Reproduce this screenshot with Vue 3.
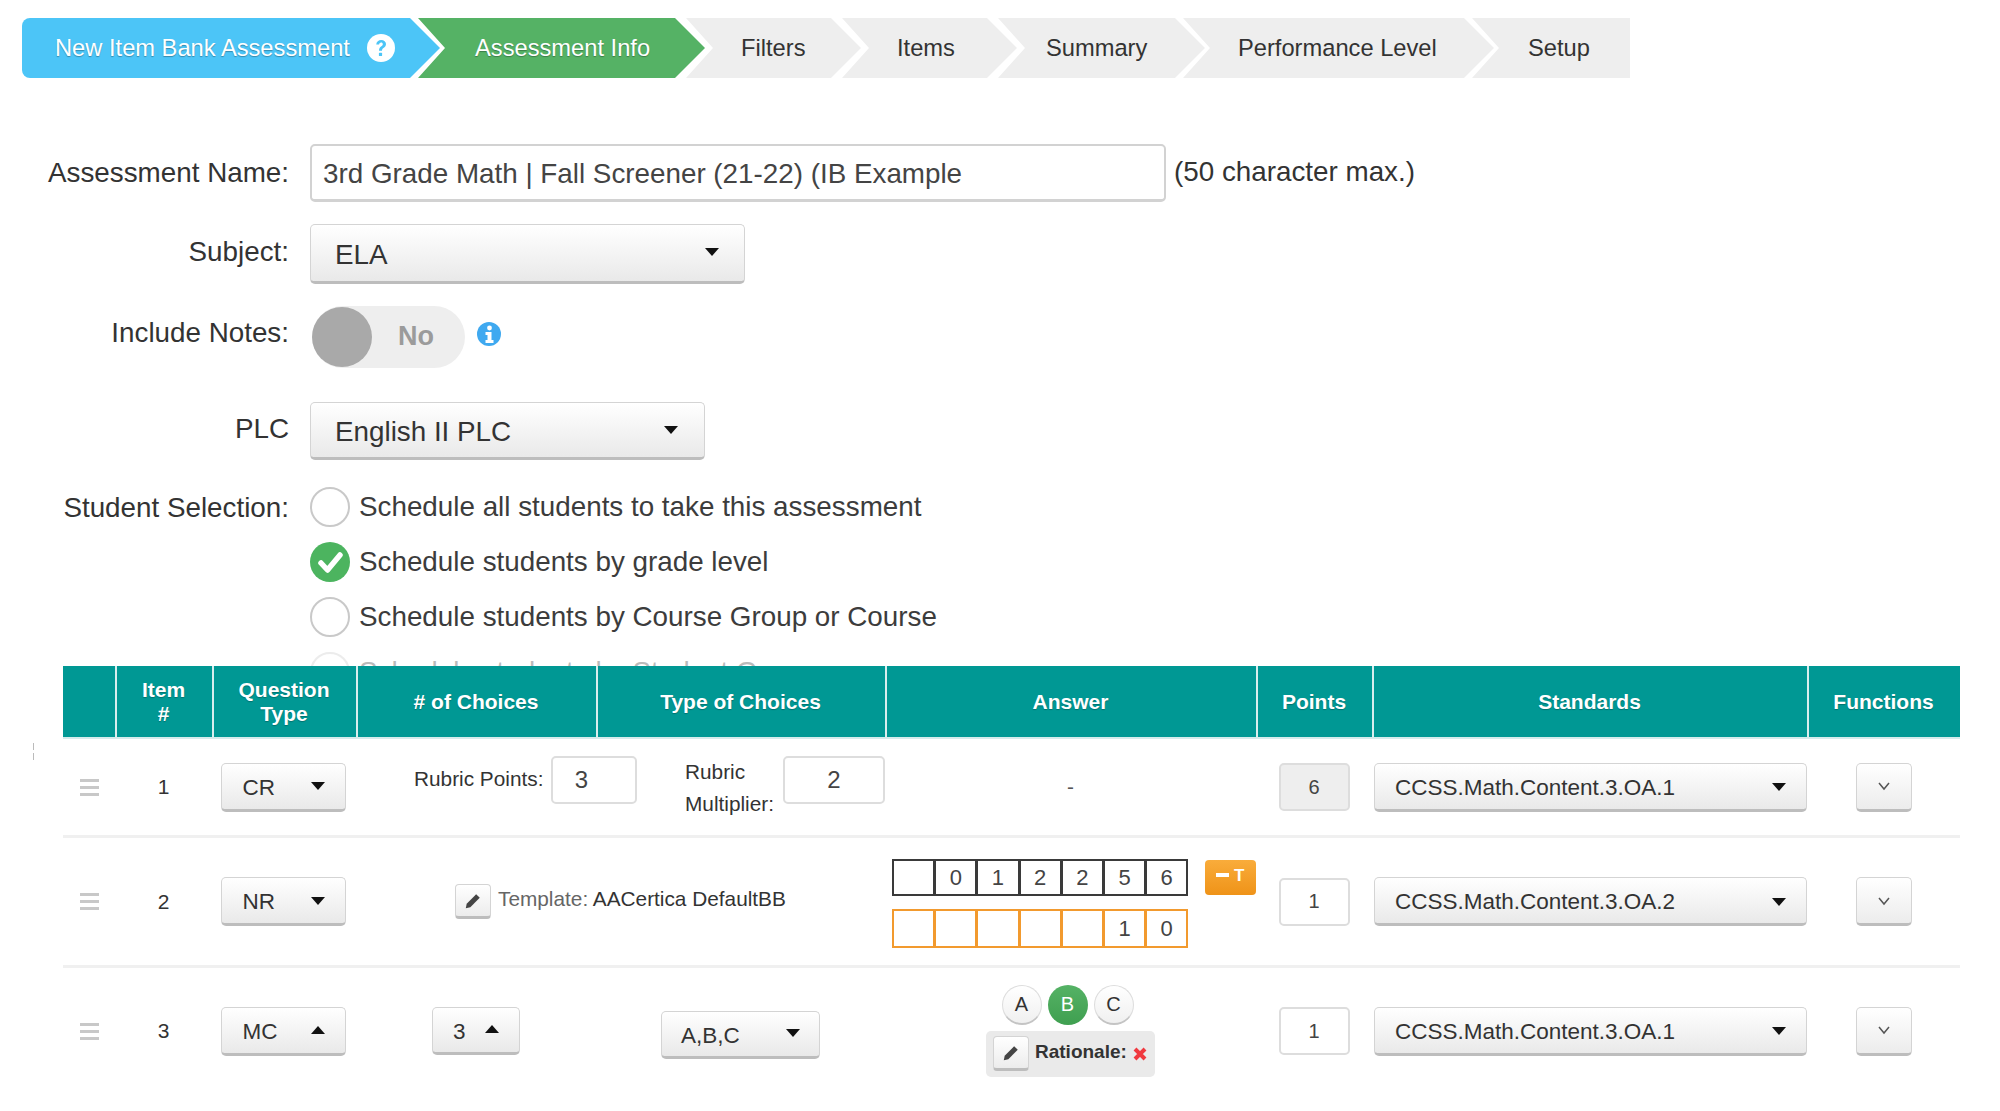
<script setup>
const steps = ['Assessment Info', 'Filters', 'Items', 'Summary', 'Performance Level', 'Setup']
const radios = [
  { text: 'Schedule all students to take this assessment', on: false },
  { text: 'Schedule students by grade level', on: true },
  { text: 'Schedule students by Course Group or Course', on: false },
  { text: 'Schedule students by Student Group', on: false }
]
const heads = [
  { text: '' }, { text: 'Item\n#' }, { text: 'Question\nType' }, { text: '# of Choices' },
  { text: 'Type of Choices' }, { text: 'Answer' }, { text: 'Points' }, { text: 'Standards' }, { text: 'Functions' }
]
const topDigits = ['', '0', '1', '2', '2', '5', '6']
const bottomDigits = ['', '', '', '', '', '1', '0']
</script>

<template>
  <div class="page">
    <nav class="steps">
      <div class="step intro">
        <span>New Item Bank Assessment</span>
        <svg class="help" viewBox="0 0 28 28" width="28" height="28">
          <circle cx="14" cy="14" r="14" fill="#fff" />
          <path d="M9.200 10.600c.3-3 2.400-4.600 5-4.600 2.800 0 4.800 1.700 4.800 4.100 0 2-1.100 3-2.500 4-1.100.8-1.500 1.300-1.500 2.700h-3c0-2.200.6-3.200 2-4.300 1.100-.8 1.800-1.400 1.800-2.300 0-1-.7-1.600-1.700-1.600-1.100 0-1.800.7-2 2z" fill="#4cc5f7" />
          <rect x="11.900" y="18.800" width="3.200" height="3.200" rx=".6" fill="#4cc5f7" />
        </svg>
      </div>
      <div v-for="(s, i) in steps" :key="s" class="step" :class="'s' + i">{{ s }}</div>
    </nav>

    <form class="form" @submit.prevent>
      <div class="row name-row">
        <label>Assessment Name:</label>
        <div class="text-input">3rd Grade Math | Fall Screener (21-22) (IB Example</div>
        <span class="hint">(50 character max.)</span>
      </div>
      <div class="row subject-row">
        <label>Subject:</label>
        <div class="select big subject">ELA<i class="caret"></i></div>
      </div>
      <div class="row notes-row">
        <label>Include Notes:</label>
        <div class="toggle"><span class="knob"></span><b>No</b></div>
        <svg class="info" viewBox="0 0 24 24" width="24" height="24">
          <circle cx="12" cy="12" r="12" fill="#3fa9f0" />
          <circle cx="12.500" cy="6" r="2.400" fill="#fff" />
          <path d="M8.500 10h6v8h2v3h-8v-3h2v-5h-2z" fill="#fff" />
        </svg>
      </div>
      <div class="row plc-row">
        <label>PLC</label>
        <div class="select big plc">English II PLC<i class="caret"></i></div>
      </div>
      <div class="row student-row">
        <label>Student Selection:</label>
        <div class="radios">
          <div v-for="(r, i) in radios" :key="r.text" class="radio-line" :class="{ faded: i === 3 }">
            <span class="radio" :class="{ on: r.on }">
              <svg v-if="r.on" viewBox="0 0 40 40" width="40" height="40">
                <path d="M11 21l6.500 7L30 13" fill="none" stroke="#fff" stroke-width="5.500" stroke-linecap="round" stroke-linejoin="round" />
              </svg>
            </span>
            <span>{{ r.text }}</span>
          </div>
        </div>
      </div>
    </form>

    <i class="stray"></i>

    <section class="table">
      <header class="grid head">
        <div v-for="(h, i) in heads" :key="i" class="th">{{ h.text }}</div>
      </header>

      <div class="grid tr r1">
        <div class="drag"><i></i><i></i><i></i></div>
        <div class="num">1</div>
        <div class="cell"><div class="select qt">CR<i class="caret"></i></div></div>
        <div class="rubric">
          <span class="rubric-label">Rubric Points:</span>
          <span class="box rubric-pts">3</span>
          <span class="multi-label">Rubric<br />Multiplier:</span>
          <span class="box rubric-mult">2</span>
        </div>
        <div class="cell dash">-</div>
        <div class="cell"><span class="box pts grey">6</span></div>
        <div class="std"><div class="select standard">CCSS.Math.Content.3.OA.1<i class="caret"></i></div></div>
        <div class="cell">
          <button class="fn" type="button"><svg viewBox="0 0 14 10" width="14" height="10"><path d="M2 2l5 6 5-6" fill="none" stroke="#555" stroke-width="1.500" /></svg></button>
        </div>
      </div>

      <div class="grid tr r2">
        <div class="drag"><i></i><i></i><i></i></div>
        <div class="num">2</div>
        <div class="cell"><div class="select qt">NR<i class="caret"></i></div></div>
        <div class="template">
          <button class="pencil" type="button">
            <svg viewBox="0 0 20 20" width="18" height="18"><path d="M13.500 2.500l4 4L7 17l-5 1 1-5z" fill="#444" /></svg>
          </button>
          <span class="tpl-text"><span class="tpl-key">Template:</span> AACertica DefaultBB</span>
        </div>
        <div class="answer-nr">
          <div class="digit-stack">
            <div class="digits dark"><span v-for="(d, i) in topDigits" :key="i">{{ d }}</span></div>
            <div class="digits orange"><span v-for="(d, i) in bottomDigits" :key="i">{{ d }}</span></div>
          </div>
          <button class="t-btn" type="button"><i></i>T</button>
        </div>
        <div class="cell"><span class="box pts">1</span></div>
        <div class="std"><div class="select standard">CCSS.Math.Content.3.OA.2<i class="caret"></i></div></div>
        <div class="cell">
          <button class="fn" type="button"><svg viewBox="0 0 14 10" width="14" height="10"><path d="M2 2l5 6 5-6" fill="none" stroke="#555" stroke-width="1.500" /></svg></button>
        </div>
      </div>

      <div class="grid tr r3">
        <div class="drag"><i></i><i></i><i></i></div>
        <div class="num">3</div>
        <div class="cell"><div class="select qt">MC<i class="caret up"></i></div></div>
        <div class="cell"><div class="select choices">3<i class="caret up"></i></div></div>
        <div class="cell"><div class="select types">A,B,C<i class="caret"></i></div></div>
        <div class="mc">
          <div class="bubbles">
            <span class="bubble">A</span>
            <span class="bubble on">B</span>
            <span class="bubble">C</span>
          </div>
          <div class="rationale">
            <button class="pencil" type="button">
              <svg viewBox="0 0 20 20" width="18" height="18"><path d="M13.500 2.500l4 4L7 17l-5 1 1-5z" fill="#444" /></svg>
            </button>
            <b>Rationale:</b>
            <svg class="cross" viewBox="0 0 14 14" width="14" height="14"><path d="M2 2l10 10M12 2L2 12" stroke="#f0393f" stroke-width="4" /></svg>
          </div>
        </div>
        <div class="cell"><span class="box pts">1</span></div>
        <div class="std"><div class="select standard">CCSS.Math.Content.3.OA.1<i class="caret"></i></div></div>
        <div class="cell">
          <button class="fn" type="button"><svg viewBox="0 0 14 10" width="14" height="10"><path d="M2 2l5 6 5-6" fill="none" stroke="#555" stroke-width="1.500" /></svg></button>
        </div>
      </div>
    </section>
  </div>
</template>

<style scoped>
.page {
  position: relative;
  width: 2000px;
  height: 1111px;
  overflow: hidden;
  background: #fff;
  color: #333;
  font-family: "Liberation Sans", Arial, sans-serif;
}

/* wizard */
.steps {
  display: flex;
  margin-left: 22px;
  padding-top: 18px;
  height: 60px;
}
.step {
  display: flex;
  align-items: center;
  height: 60px;
  padding-left: 55px;
  box-sizing: border-box;
  flex: none;
  font-size: 23.700px;
  color: #333;
  background: #eee;
  margin-left: -19px;
  clip-path: polygon(0 0, calc(100% - 30px) 0, 100% 50%, calc(100% - 30px) 100%, 0 100%, 27px 50%);
}
.intro {
  width: 418px;
  margin-left: 0;
  padding-left: 33px;
  background: #4cc5f7;
  color: #fff;
  border-radius: 8px 0 0 8px;
  text-shadow: 0 1px 1px rgba(0, 0, 0, 0.3);
  clip-path: polygon(0 0, calc(100% - 30px) 0, 100% 50%, calc(100% - 30px) 100%, 0 100%);
}
.help { margin-left: 17px; flex: none; }
.s0 {
  width: 287px;
  margin-left: -22px;
  padding-left: 57px;
  background: #55b265;
  color: #fff;
  text-shadow: 0 1px 1px rgba(0, 0, 0, 0.3);
}
.s1 { width: 175px; }
.s2 { width: 175px; }
.s3 { width: 207px; padding-left: 48px; }
.s4 { width: 311px; margin-left: -22px; }
.s5 {
  width: 158px;
  margin-left: -22px;
  padding-left: 56px;
  clip-path: polygon(0 0, 100% 0, 100% 100%, 0 100%, 27px 50%);
}

/* form */
.form {
  box-sizing: border-box;
  height: 588px;
  padding-top: 66px;
  overflow: hidden;
  font-size: 27.800px;
}
.row {
  display: flex;
  align-items: center;
}
.row > label {
  width: 289px;
  margin-right: 21px;
  text-align: right;
  flex: none;
}
.name-row { height: 58px; }
.subject-row { height: 60px; margin-top: 22px; }
.notes-row { height: 62px; margin-top: 22px; }
.plc-row { height: 58px; margin-top: 34px; }
.student-row { align-items: flex-start; margin-top: 27px; }
.student-row > label { line-height: 42px; }
.name-row > label { margin-top: 0; }
.subject-row > label { margin-top: -4px; }
.notes-row > label { margin-top: -8px; }
.plc-row > label { margin-top: -4px; }

.text-input {
  box-sizing: border-box;
  width: 856px;
  height: 58px;
  padding-left: 11px;
  line-height: 56px;
  border: 2px solid #d2d2d2;
  border-bottom-width: 3px;
  border-radius: 5px;
  color: #444;
  background: #fff;
}
.hint { margin-left: 8px; margin-top: -3px; }

.select {
  box-sizing: border-box;
  position: relative;
  display: flex;
  align-items: center;
  border: 1px solid #d4d4d4;
  border-bottom: 3px solid #bdbdbd;
  border-radius: 5px;
  background: linear-gradient(#fff, #e9e9e9);
  color: #333;
}
.big { height: 58px; padding-left: 24px; padding-top: 3px; }
.subject { width: 435px; height: 60px; }
.plc { width: 395px; }
.caret {
  position: absolute;
  top: 50%;
  margin-top: -5px;
  width: 0;
  height: 0;
  border-left: 7px solid transparent;
  border-right: 7px solid transparent;
  border-top: 8px solid #111;
}
.caret.up {
  border-top: 0;
  border-bottom: 8px solid #111;
}
.subject .caret { right: 25px; margin-top: -5px; }
.plc .caret { right: 26px; margin-top: -4px; }

.toggle {
  position: relative;
  box-sizing: border-box;
  width: 153px;
  height: 62px;
  margin-left: 2px;
  padding-left: 86px;
  line-height: 60px;
  border-radius: 31px;
  background: #eee;
  color: #9b9b9b;
  font-size: 27px;
}
.knob {
  position: absolute;
  left: 0;
  top: 1px;
  width: 60px;
  height: 60px;
  border-radius: 50%;
  background: #a9a9a9;
}
.info { margin-left: 12px; margin-top: -6px; }

.radio-line {
  display: flex;
  align-items: center;
  gap: 9px;
  height: 40px;
  margin-bottom: 15px;
  color: #3c3c3c;
}
.radio-line span:last-child { margin-top: -1px; }
.radio {
  box-sizing: border-box;
  width: 40px;
  height: 40px;
  flex: none;
  border: 2px solid #c9c9c9;
  border-radius: 50%;
  background: #fff;
}
.radio.on {
  border: 0;
  background: #4cb45f;
}
.radio svg { display: block; }
.faded { opacity: 0.35; }

.stray {
  position: absolute;
  left: 33px;
  top: 743px;
  width: 1px;
  height: 17px;
  background: linear-gradient(#bbb 40%, transparent 40%, transparent 60%, #bbb 60%);
}

/* table */
.table {
  margin-left: 63px;
  width: 1897px;
}
.grid {
  display: grid;
  grid-template-columns: 52px 97px 144px 240px 289px 371px 116px 435px 153px;
}
.head {
  background: #009894;
  border-bottom: 2px solid #d5ecec;
  box-sizing: border-box;
  height: 73px;
}
.th {
  display: flex;
  align-items: center;
  justify-content: center;
  white-space: pre-line;
  text-align: center;
  color: #fff;
  font-weight: 700;
  font-size: 21px;
  line-height: 24px;
  text-shadow: 0 1px 1px rgba(0, 0, 0, 0.25);
  border-left: 2px solid #d9eeee;
  padding-right: 2px;
  box-sizing: border-box;
}
.th:first-child { border-left: 0; }

.tr {
  align-items: center;
  font-size: 20.800px;
  border-bottom: 3px solid #f0f0f0;
  box-sizing: border-box;
}
.r1 { height: 99px; }
.r2 { height: 130px; }
.r3 { height: 126px; border-bottom: 0; }

.drag {
  display: flex;
  flex-direction: column;
  align-items: center;
  gap: 4px;
}
.drag i {
  width: 19px;
  height: 3px;
  background: #c8c8c8;
}
.num {
  text-align: center;
  font-size: 21px;
}
.cell {
  display: flex;
  align-items: center;
  justify-content: center;
}
.qt {
  width: 125px;
  height: 49px;
  margin-left: -2px;
  padding: 3px 0 0 21px;
  font-size: 22.500px;
}
.qt .caret { right: 20px; margin-top: -4px; }
.choices {
  width: 88px;
  height: 48px;
  padding: 3px 0 0 20px;
  font-size: 22.500px;
}
.choices .caret { right: 20px; margin-top: -5px; }
.types {
  width: 159px;
  height: 48px;
  padding: 3px 0 0 19px;
  font-size: 22.500px;
  margin-top: 8px;
}
.types .caret { right: 19px; margin-top: -5px; }

.rubric {
  grid-column: span 2;
  align-self: start;
  display: flex;
  padding: 17px 0 0 58px;
  line-height: 46px;
}
.rubric-label { width: 130px; margin-right: 7px; white-space: nowrap; }
.box {
  box-sizing: border-box;
  display: flex;
  align-items: center;
  justify-content: center;
  border: 2px solid #ddd;
  border-radius: 5px;
  background: #fff;
  font-size: 24px;
  color: #444;
}
.rubric-pts { width: 86px; height: 48px; padding-right: 25px; }
.multi-label {
  width: 90px;
  margin-left: 48px;
  margin-right: 8px;
  line-height: 32px;
}
.rubric-mult { width: 102px; height: 48px; }
.dash { color: #555; }
.pts {
  width: 71px;
  height: 48px;
  font-size: 20px;
}
.grey { background: #eee; }
.std { padding-left: 2px; }
.standard {
  width: 433px;
  height: 49px;
  padding: 3px 0 0 20px;
  font-size: 22.500px;
}
.standard .caret { right: 20px; margin-top: -3px; }
.fn {
  box-sizing: border-box;
  display: flex;
  align-items: center;
  justify-content: center;
  width: 56px;
  height: 49px;
  padding: 0;
  border: 1px solid #d4d4d4;
  border-bottom: 3px solid #bdbdbd;
  border-radius: 5px;
  background: linear-gradient(#fff, #ececec);
}

.template {
  grid-column: span 2;
  display: flex;
  align-items: center;
  gap: 7px;
  padding-left: 99px;
}
.pencil {
  box-sizing: border-box;
  display: flex;
  align-items: center;
  justify-content: center;
  width: 36px;
  height: 35px;
  padding: 0;
  border: 1px solid #d4d4d4;
  border-bottom: 3px solid #bdbdbd;
  border-radius: 4px;
  background: linear-gradient(#fff, #ececec);
}
.tpl-text { color: #333; margin-top: -5px; }
.tpl-key { color: #666; }

.answer-nr {
  align-self: start;
  display: flex;
  align-items: flex-start;
  padding: 21px 0 0 8px;
}
.digit-stack {
  display: flex;
  flex-direction: column;
  align-items: flex-end;
  gap: 13px;
}
.digits {
  display: flex;
  box-sizing: border-box;
  height: 37px;
  font-size: 22px;
  color: #444;
}
.digits span {
  box-sizing: border-box;
  display: flex;
  align-items: center;
  justify-content: center;
  width: 43.200px;
  margin-left: -1px;
  border: 2px solid #3a3a3a;
}
.digits.orange { height: 39px; }
.digits.orange span { border-color: #f29a2e; }
.t-btn {
  position: relative;
  box-sizing: border-box;
  width: 51px;
  height: 35px;
  margin: 1px 0 0 17px;
  padding: 0 0 3px 17px;
  border: 0;
  border-radius: 4px;
  background: linear-gradient(#f9ac3b, #ef9318);
  color: #fff;
  font-family: inherit;
  font-size: 17px;
  font-weight: 700;
}
.t-btn i {
  position: absolute;
  left: 11px;
  top: 13px;
  width: 13px;
  height: 4px;
  background: #fff;
}

.mc {
  display: flex;
  flex-direction: column;
  align-items: center;
  gap: 6px;
  font-size: 20px;
  margin-top: -1px;
}
.bubbles {
  display: flex;
  gap: 6px;
  margin-right: 6px;
}
.bubble {
  box-sizing: border-box;
  display: flex;
  align-items: center;
  justify-content: center;
  width: 40px;
  height: 40px;
  border: 1px solid #ddd;
  border-bottom: 2px solid #c4c4c4;
  border-radius: 50%;
  background: linear-gradient(#fff, #f0f0f0);
  color: #333;
}
.bubble.on {
  border: 0;
  background: linear-gradient(#55b265, #3f9f50);
  color: #fff;
}
.rationale {
  box-sizing: border-box;
  display: flex;
  align-items: center;
  width: 169px;
  height: 46px;
  padding-left: 7px;
  border-radius: 5px;
  background: #eaeaea;
}
.rationale b { margin-left: 6px; font-size: 19px; margin-top: -3px; color: #333; }
.cross { margin-left: 6px; }
</style>
